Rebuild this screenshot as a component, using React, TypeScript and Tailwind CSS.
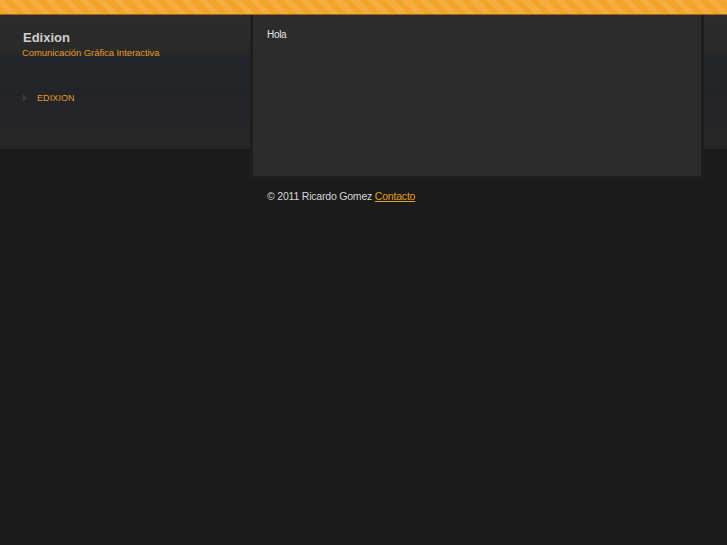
export default function App() {
  return (
    <div className="min-h-[545px] bg-[#1b1b1b] font-['Liberation_Sans',Arial,sans-serif]">
      {/* striped top bar */}
      <div className="h-[14px] bg-[#f2a42b] bg-[repeating-linear-gradient(45deg,#f2a42b_0px,#f2a42b_6px,#f5ae3d_6px,#f5ae3d_12px)]" />
      <div className="h-px bg-[#9a651d]" />

      <div className="flex bg-[linear-gradient(180deg,#2c2c2c_0px,#2a2a2a_36px,#23252a_42px,#232428_80px,#272727_134px)] bg-no-repeat bg-[length:100%_134px]">
        <aside className="w-[250px] shrink-0 pl-[23px] pt-[15px]">
          <h1 className="text-[13px] font-bold leading-[16px] text-[#cfcfcf]">Edixion</h1>
          <p className="mt-px -ml-px text-[9.5px] leading-[12px] tracking-[-0.08px] text-[#e49c27]">
            Comunicación Gráfica Interactiva
          </p>
          <ul className="mt-[33px]">
            <li className="flex items-center gap-[10px] text-[9px] leading-[12px] tracking-[0.1px] text-[#e49c27]">
              <span className="h-0 w-0 border-y-[4px] border-l-[4px] border-y-transparent border-l-[#3a3a3a]" />
              <span>EDIXION</span>
            </li>
          </ul>
        </aside>

        <div className="shrink-0">
          <main className="h-[164px] w-[454px] border-x-[3px] border-b-[3px] border-[#1e1e1e] bg-[#2c2c2c] px-[14px] pt-[14px] text-[10px] leading-[12px] tracking-[-0.3px] text-[#e6e6e6]">
            Hola
          </main>
          <footer className="pl-[17px] pt-[11px] text-[10.5px] leading-[12px] tracking-[-0.2px] text-[#d6d6d6]">
            © 2011 Ricardo Gomez{' '}
            <a href="#" className="text-[#e49c27] underline">Contacto</a>
          </footer>
        </div>

        <div className="h-[134px] flex-1" />
      </div>
    </div>
  );
}
